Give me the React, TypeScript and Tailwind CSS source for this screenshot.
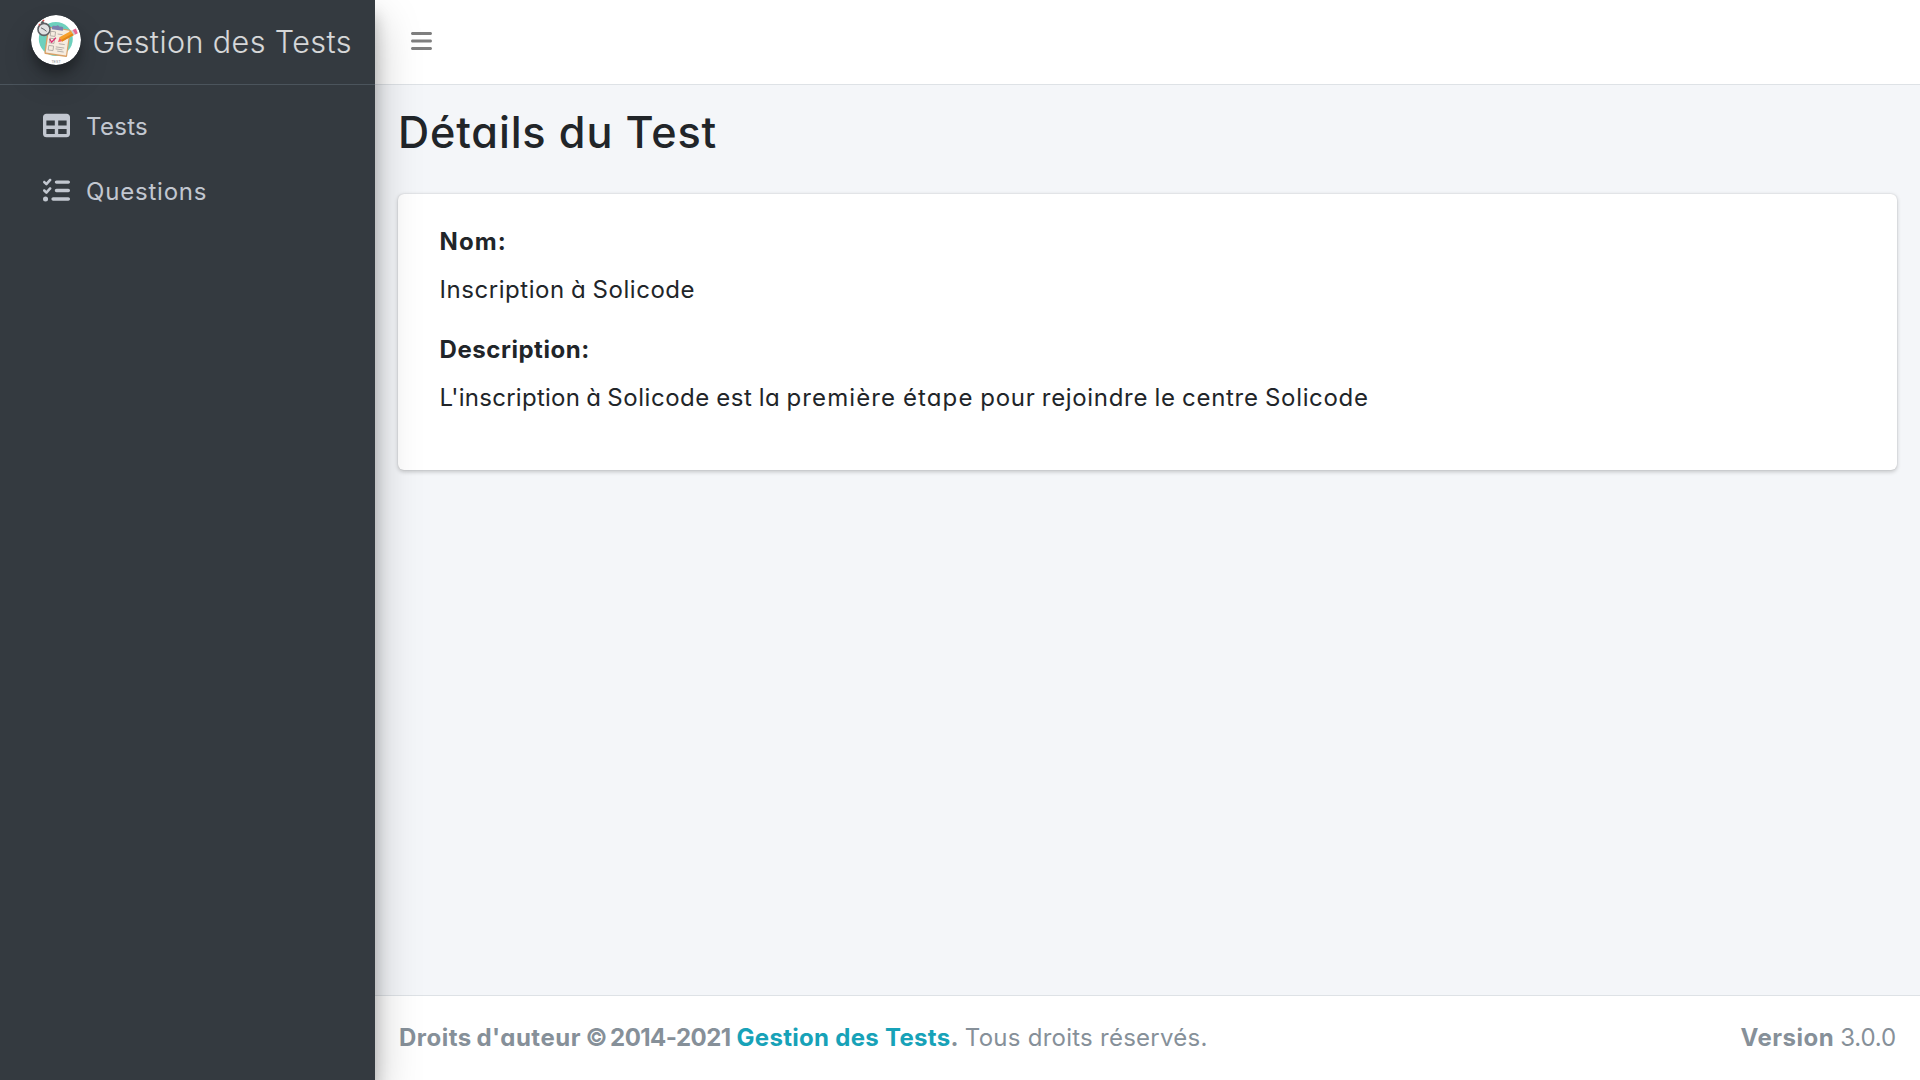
import { FaBars, FaListCheck, FaTable } from "react-icons/fa6";

function Logo() {
  return (
    <svg
      viewBox="0 0 50 50"
      className="size-[50px] shrink-0 rounded-full shadow-[0_15px_30px_rgba(0,0,0,0.19),0_9px_9px_rgba(0,0,0,0.23)]"
    >
      <circle cx="25" cy="25" r="25" fill="#fff" />
      <circle cx="24.8" cy="24" r="17" fill="#6dd0bd" />
      <g transform="rotate(8 26 27)">
        <rect x="15" y="13" width="23" height="27.5" rx="1" fill="#d9a066" />
        <rect x="16.3" y="14" width="20.5" height="25" fill="#f6ece0" />
        <path d="M19 15v-2.500q0-1.200 1.200-1.200h2.800q1.500-2 3 0h3q1.200 0 1.200 1.200v2.500z" fill="#7d7fae" />
        <g fill="none" stroke="#aaa49e" strokeWidth=".8">
          <rect x="18.4" y="17.2" width="4.8" height="4.6" />
          <rect x="18.4" y="24.2" width="4.8" height="4.6" />
          <rect x="18.4" y="31.500" width="4.8" height="4.6" />
          <path d="M25.500 19h5M25.500 32h8.500M25.500 34h7M27.500 36h6.500M28 28.500h6" />
        </g>
        <path d="m18.300 25 2.400 3 3.600-5" fill="none" stroke="#dc2f72" strokeWidth="1.300" />
      </g>
      <path d="m27 27 1.700-4.700 2.700 3.900z" fill="#f05a6a" />
      <path d="m28.400 22.300 12.400-6.700 2.600 4.100-12.200 6.800z" fill="#f6a02c" />
      <path d="m30 24.900 12.400-7 1 1.800-12.200 6.800z" fill="#e38618" />
      <path d="m40.100 16 1.800-1 2.600 4.200-1.800 1z" fill="#c9cdd3" />
      <path d="m41.700 15.100 3.200-1.600 1.900 4.700-2.400 1.200z" fill="#e8668f" />
      <circle cx="13" cy="14.400" r="6" fill="#e0e1e2" stroke="#606367" strokeWidth="1.600" />
      <path d="M13 14.400 10 12.800M13 14.400l2.500 2" stroke="#55585c" strokeWidth=".9" />
      <path d="m9.500 7.300 2.700-1.900.9 2.300-2.200.6z" fill="#55585c" />
      <path d="m11.300 5.200 1.700-.8.500 1.500-1.600.5zM7.400 9.800l1.200-1.200.8 1-1.200 1.200z" fill="#e04848" />
      <text x="25" y="47.800" textAnchor="middle" fontSize="3.600" fill="#8d8d8d" className="font-['Liberation_Sans']">
        TEST
      </text>
    </svg>
  );
}

function Sidebar() {
  return (
    <aside className="relative z-10 flex w-[375px] shrink-0 flex-col bg-[#343a40] shadow-[0_21px_42px_rgba(0,0,0,0.25),0_15px_15px_rgba(0,0,0,0.22)]">
      <a className="flex h-[85px] items-start border-b border-[#4b545c] pt-[15px] pl-[31px]">
        <Logo />
        <span className="ml-[11.500px] pt-[4px] text-[30.500px] leading-[45px] font-light tracking-[0.420px] whitespace-nowrap text-white/80">
          Gestion des Tests
        </span>
      </a>
      <nav className="flex flex-col gap-[5px] pt-[14px] pl-[43px] text-[#c2c7d0]">
        <a className="flex h-[60px] items-center tracking-[0.300px]">
          <FaTable className="mt-[-7px] mr-[16px] size-[27px]" />
          <span className="mt-[-4px]">Tests</span>
        </a>
        <a className="flex h-[60px] items-center tracking-[0.800px]">
          <FaListCheck className="mt-[-7px] mr-[16px] size-[27px]" />
          <span className="mt-[-4px]">Questions</span>
        </a>
      </nav>
    </aside>
  );
}

export default function App() {
  return (
    <div className="flex h-screen w-full overflow-hidden bg-[#f4f6f9] font-[Inter,sans-serif] text-[24px] leading-[36px] text-[#212529] [font-feature-settings:'cv11']">
      <Sidebar />
      <div className="flex min-w-0 flex-1 flex-col">
        <header className="flex h-[85px] shrink-0 items-start border-b border-[#dee2e6] bg-white pt-[29px] pl-[36px] text-black/50">
          <FaBars className="h-[24px] w-[21px]" />
        </header>
        <main className="flex-1 px-[23px]">
          <h1 className="pt-[21px] text-[43.200px] leading-[52px] font-medium tracking-[0.850px]">Détails du Test</h1>
          <section className="mt-[35.500px] h-[276px] rounded-[6px] bg-white pt-[30px] pl-[41.500px] shadow-[0_0_1.500px_rgba(0,0,0,0.125),0_1.500px_4.500px_rgba(0,0,0,0.2)]">
            <p className="mb-[12px] font-bold tracking-[1.100px]">Nom:</p>
            <p className="mb-[24px] tracking-[0.550px] [word-spacing:-1px]">Inscription à Solicode</p>
            <p className="mb-[12px] font-bold tracking-[0.550px]">Description:</p>
            <p className="tracking-[0.680px] [word-spacing:-1px]">
              <span className="tracking-[0.280px]">L'inscription à </span>
              <span className="tracking-[0.550px]">Solicode est la </span>
              <span className="tracking-[1.100px]">première étape </span>
              pour rejoindre le centre Solicode
            </p>
          </section>
        </main>
        <footer className="flex h-[85px] shrink-0 justify-between border-t border-[#dee2e6] bg-white pt-[23.500px] pr-[24px] pl-[24px] text-[#869099]">
          <div className="flex whitespace-pre">
            <strong className="tracking-[0.500px] [word-spacing:-1.500px]">Droits d'auteur </strong>
            <strong className="tracking-[-0.550px] [word-spacing:-2px]">© 2014-2021</strong>
            <strong className="ml-[6px] tracking-[0.300px]">
              <a className="text-[#17a2b8]">Gestion des Tests</a>.
            </strong>
            <span className="ml-[6px] tracking-[0.250px]">Tous droits réservés.</span>
          </div>
          <div className="flex">
            <strong className="tracking-[0.500px]">Version</strong>
            <span className="ml-[6px] tracking-[-0.150px]">3.0.0</span>
          </div>
        </footer>
      </div>
    </div>
  );
}
